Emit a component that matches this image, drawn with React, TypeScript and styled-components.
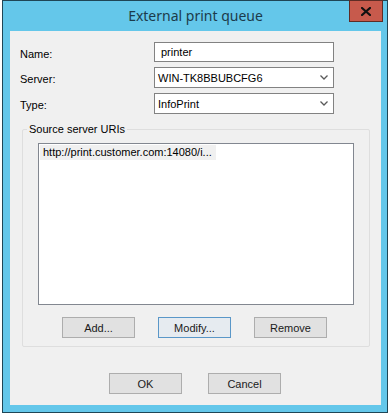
import React from 'react'
import styled, { createGlobalStyle, css } from 'styled-components'

const GlobalStyle = createGlobalStyle`
    html, body {
        margin: 0;
        padding: 0;
        background: #ffffff;
    }
    * {
        box-sizing: border-box;
    }
`

const Window = styled.div`
    position: relative;
    margin-left: 2px;
    width: 386px;
    height: 413px;
    border: 1px solid #1f4656;
    background-color: #64c7ea;
    padding: 0 6px 7px 7px;
    display: flex;
    flex-direction: column;
`

const TitleBar = styled.div`
    height: 30px;
    display: flex;
    align-items: center;
    justify-content: center;
    font-family: 'Noto Sans', 'Open Sans', sans-serif;
    font-size: 14px;
    color: #1c3b4b;
    padding-bottom: 1px;
`

const CloseButton = styled.div`
    position: absolute;
    top: -1px;
    right: 4px;
    width: 34px;
    height: 22px;
    background-color: #c75a4c;
    border: 1px solid #5e2c25;
    display: flex;
    align-items: center;
    justify-content: center;
`

const Panel = styled.div`
    flex: 1;
    background-color: #f0f0f0;
    display: flex;
    flex-direction: column;
    font-family: 'Liberation Sans', Arial, sans-serif;
    font-size: 11px;
    color: #000;
`

const Fields = styled.div`
    display: grid;
    grid-template-columns: 134px 180px;
    row-gap: 5px;
    padding: 11px 0 0 10px;
    align-items: center;
`

const Label = styled.div`
    font-size: 11px;
    padding-top: 3px;
`

const fieldBox = css`
    height: 21px;
    border: 1px solid #828282;
    background: #fff;
    display: flex;
    align-items: center;
`

const TextInput = styled.div`
    ${fieldBox};
    height: 20px;
    padding-left: 6px;
`

const Select = styled.div`
    ${fieldBox};
    padding: 0 5px 0 3px;
    justify-content: space-between;
`

const GroupBox = styled.div`
    position: relative;
    margin: 15px 0 0 12px;
    width: 348px;
    height: 218px;
    border: 1px solid #dedede;
    border-radius: 2px;
    padding: 13px 0 0 15px;
`

const Legend = styled.div`
    position: absolute;
    top: -8px;
    left: 4px;
    padding: 0 2px;
    background: #f0f0f0;
    line-height: 14px;
`

const ListBox = styled.div`
    width: 316px;
    height: 162px;
    border: 1px solid #828790;
    background: #fff;
    padding: 1px;
`

const ListItem = styled.div`
    display: inline-block;
    height: 15px;
    line-height: 15px;
    padding: 0 4px 0 3px;
    background: #f0f0f0;
`

const ButtonRow = styled.div<{ $gap: number; $left: number; $top: number }>`
    display: flex;
    gap: ${p => p.$gap}px;
    padding-left: ${p => p.$left}px;
    margin-top: ${p => p.$top}px;
`

const Button = styled.div<{ $focused?: boolean }>`
    width: 73px;
    height: 21px;
    border: 1px solid ${p => (p.$focused ? '#5a97c8' : '#adadad')};
    background: ${p => (p.$focused ? '#e6ebf0' : '#e1e1e1')};
    display: flex;
    align-items: center;
    justify-content: center;
    font-size: 11px;
    color: #1a1a1a;
`

const Chevron = () => (
    <svg width="8" height="5" viewBox="0 0 8 5">
        <path d="M0.5 0.5 L4 4 L7.5 0.5" fill="none" stroke="#5a5a5a" strokeWidth="1.3" />
    </svg>
)

const CloseX = () => (
    <svg width="10" height="9" viewBox="0 0 10 9">
        <path d="M1 1 L9 8 M9 1 L1 8" stroke="#111" strokeWidth="2.2" strokeLinecap="square" />
    </svg>
)

const App: React.FC = () => {
    return (
        <>
            <GlobalStyle />
            <Window>
                <TitleBar>External print queue</TitleBar>
                <CloseButton>
                    <CloseX />
                </CloseButton>
                <Panel>
                    <Fields>
                        <Label>Name:</Label>
                        <TextInput>printer</TextInput>
                        <Label>Server:</Label>
                        <Select>
                            <span>WIN-TK8BBUBCFG6</span>
                            <Chevron />
                        </Select>
                        <Label>Type:</Label>
                        <Select>
                            <span>InfoPrint</span>
                            <Chevron />
                        </Select>
                    </Fields>
                    <GroupBox>
                        <Legend>Source server URIs</Legend>
                        <ListBox>
                            <ListItem>http://print.customer.com:14080/i...</ListItem>
                        </ListBox>
                        <ButtonRow $gap={23} $left={24} $top={12}>
                            <Button>Add...</Button>
                            <Button $focused>Modify...</Button>
                            <Button>Remove</Button>
                        </ButtonRow>
                    </GroupBox>
                    <ButtonRow $gap={26} $left={99} $top={26}>
                        <Button>OK</Button>
                        <Button>Cancel</Button>
                    </ButtonRow>
                </Panel>
            </Window>
        </>
    )
}

export default App
